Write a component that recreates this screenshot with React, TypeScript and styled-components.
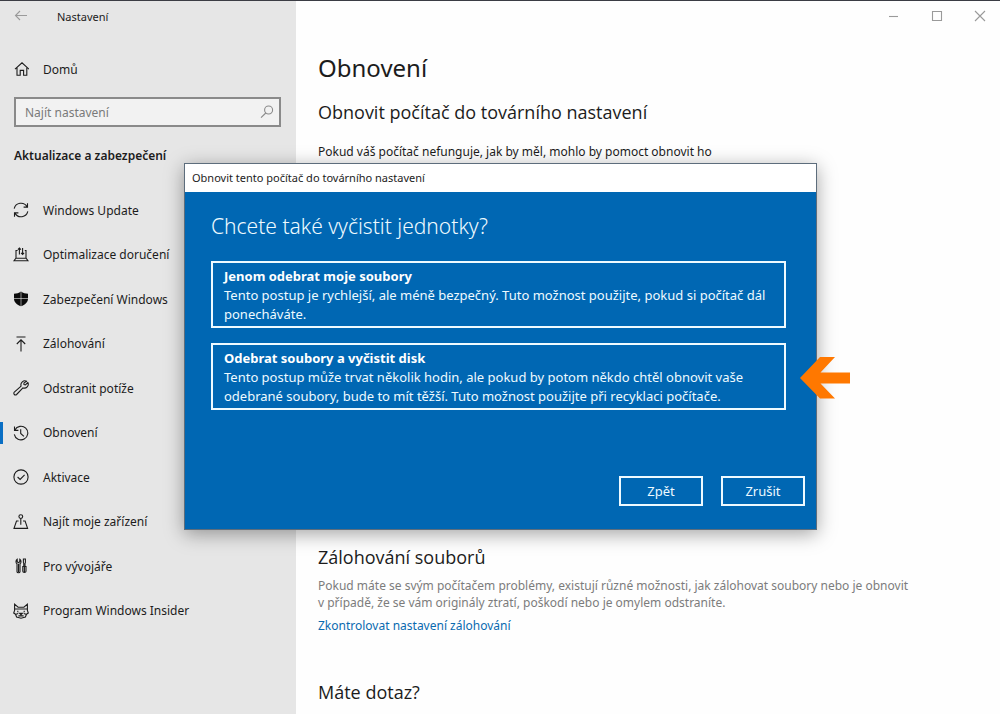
import React from "react";
import styled, { createGlobalStyle, css } from "styled-components";

const GlobalStyle = createGlobalStyle`
  *, *::before, *::after { box-sizing: border-box; }
  body {
    margin: 0;
    background: #fefefe;
    color: #1c1c1c;
    font-family: "Noto Sans", "Open Sans", sans-serif;
    font-size: 12px;
    line-height: 17px;
  }
  h1, h2, h3, p, ul { margin: 0; padding: 0; font-weight: 400; }
  ul { list-style: none; }
  button, input { font: inherit; color: inherit; }
`;

const Window = styled.div`
  display: flex;
  min-height: 100vh;
  border-top: 1px solid #3b3d44;
`;

const Sidebar = styled.nav`
  flex: 0 0 296px;
  background: #e6e6e6;
  padding-bottom: 24px;
`;

const TitleBar = styled.header`
  display: flex;
  align-items: center;
  height: 30px;
  padding-left: 13px;
  gap: 28px;
  font-size: 11px;
`;

const IconButton = styled.button`
  display: grid;
  place-items: center;
  padding: 0;
  border: 0;
  background: none;
  color: #9a9a9a;
`;

const navItem = css`
  display: flex;
  align-items: center;
  gap: 14px;
  padding-left: 13px;
  color: #1c1c1c;
  text-decoration: none;
`;

const HomeLink = styled.a`
  ${navItem}
  height: 40px;
  margin-top: 18px;
`;

const SearchBox = styled.label`
  display: flex;
  align-items: center;
  height: 30px;
  margin: 8px 15px 0 14px;
  padding: 0 4px 0 9px;
  border: 2px solid #8a8a8a;
  background: #f2f2f2;
  color: #8a8a8a;
`;

const SearchInput = styled.input`
  flex: 1;
  min-width: 0;
  padding: 0;
  border: 0;
  outline: 0;
  background: none;
  &::placeholder { color: #7a7a7a; opacity: 1; }
`;

const GroupTitle = styled.h2`
  margin: 20px 14px 0;
  font-size: 12px;
  line-height: 18px;
  font-weight: 600;
`;

const NavList = styled.ul`
  display: flex;
  flex-direction: column;
  height: 445px;
  margin-top: 23px;
`;

const NavRow = styled.li`
  display: flex;
  flex: 1;
`;

const NavLink = styled.a<{ $active?: boolean }>`
  ${navItem}
  flex: 1;
  position: relative;
  &::before {
    content: "";
    display: ${(p) => (p.$active ? "block" : "none")};
    position: absolute;
    left: 0;
    width: 3px;
    height: 22px;
    background: #0a6fc4;
  }
`;

const Main = styled.main`
  flex: 1;
  min-width: 0;
`;

const WindowControls = styled.div`
  display: flex;
  justify-content: flex-end;
  height: 30px;
  padding-right: 12px;
  gap: 27px;
`;

const Content = styled.div`
  padding: 17px 22px 0;
`;

const PageTitle = styled.h1`
  margin-bottom: 11px;
  font-size: 24px;
  line-height: 40px;
`;

const Section = styled.section<{ $space: number }>`
  min-height: ${(p) => p.$space}px;
`;

const SectionTitle = styled.h2`
  font-family: "Open Sans", "Noto Sans", sans-serif;
  font-size: 18px;
  line-height: 26px;
`;

const Lead = styled.p`
  margin-top: 18px;
`;

const Note = styled.p`
  max-width: 620px;
  margin-top: 7px;
  color: #7c7c7c;
`;

const TextLink = styled.a`
  display: inline-block;
  margin-top: 6px;
  color: #0a6ab0;
  text-decoration: none;
`;

const Overlay = styled.div`
  position: absolute;
  inset: 0;
  padding: 163px 183px 0 184px;
`;

const Dialog = styled.div`
  position: relative;
  border: 1px solid #5d6d7c;
  background: #0067b3;
  color: #eefaff;
  font-size: 13px;
  box-shadow: 0 4px 18px rgba(0, 0, 0, 0.36);
`;

const DialogBar = styled.div`
  height: 28px;
  padding-left: 7px;
  background: #fff;
  color: #1c1c1c;
  font-size: 11px;
  line-height: 28px;
`;

const DialogBody = styled.div`
  display: flex;
  flex-direction: column;
  gap: 15px;
  padding: 17px 30px 0 26px;
`;

const DialogTitle = styled.h2`
  margin-bottom: 3px;
  font-size: 21px;
  line-height: 34px;
  font-weight: 300;
`;

const OptionCard = styled.button`
  padding: 4px 9px 2px 11px;
  border: 2px solid #eefaff;
  background: none;
  text-align: left;
  line-height: 19px;
`;

const OptionTitle = styled.strong`
  display: block;
  color: #fff;
`;

const DialogActions = styled.div`
  display: flex;
  justify-content: flex-end;
  gap: 18px;
  padding: 66px 11px 23px;
`;

const ActionButton = styled.button`
  width: 84px;
  height: 30px;
  padding: 0;
  border: 2px solid #eefaff;
  background: none;
`;

const Pointer = styled.svg`
  position: absolute;
  top: 193px;
  right: -34px;
`;

const Svg = ({ children, size = 16 }: { children: React.ReactNode; size?: number }) => (
  <svg width={size} height={size} viewBox="0 0 16 16" fill="none" stroke="currentColor" strokeWidth="1.1" aria-hidden="true">
    {children}
  </svg>
);

const BackIcon = () => <Svg><path d="M14 7.500H2.500M7 3 2.500 7.500 7 12" /></Svg>;
const HomeIcon = () => <Svg><path d="M2 8.200 9 1.800l7 6.400M4 6.800v7.400h3.200V9.400h3.400v4.800h3.200V6.800" /></Svg>;
const SearchIcon = () => <Svg><circle cx="9.600" cy="6" r="4" /><path d="M6.800 9 2 13.600" /></Svg>;
const SyncIcon = () => (
  <Svg><path d="M1.200 6.600A7 7 0 0 1 14 4.600M14.500 1.200v3.900h-3.900M14.800 9.400A7 7 0 0 1 2 11.400M1.500 14.800v-3.900h3.900" /></Svg>
);
const DeliveryIcon = () => (
  <Svg><path d="M4.600 3.500H3v7.500L1 13.700h14L13 11V3.500h-1.200M3 11.200h10M6.400 7.500V1M4.900 2.700l1.500-1.600 1.500 1.600M9.600 1v6.500M8.100 5.900l1.500 1.600 1.500-1.600" /></Svg>
);
const ShieldIcon = () => (
  <Svg>
    <path d="M8 .5C6 2 3.500 2.700 1 2.700v5c0 3.500 3 6 7 7.500 4-1.500 7-4 7-7.500v-5C12.500 2.700 10 2 8 .5Z" fill="#0c0c0c" stroke="none" />
    <path d="M8 .5v15M1 7.500h14" stroke="#e6e6e6" strokeWidth=".6" />
  </Svg>
);
const UploadIcon = () => <Svg><path d="M3.500 1h9M8 15.500V4M3.800 8 8 3.800 12.200 8" /></Svg>;
const WrenchIcon = () => (
  <Svg><path d="M13.700 1.300a4 4 0 0 0-5.600 4.800L1.300 12.200a1.600 1.600 0 0 0 2.300 2.300L9.900 7.900a4 4 0 0 0 5-5.400L12.400 4.900 10.900 4.500 11 2.900Z" strokeLinejoin="round" /></Svg>
);
const HistoryIcon = () => (
  <Svg><path d="M1.900 5A6.800 6.800 0 1 1 1.300 9.300M1.500 1.500v3.900h3.900M7.700 4.200v4.300l3.200 2.800" /></Svg>
);
const CheckIcon = () => <Svg><circle cx="8" cy="8" r="7.100" /><path d="m4.600 8 2.500 2.500L11.600 5.800" /></Svg>;
const LocateIcon = () => (
  <Svg><circle cx="7.800" cy="2.600" r="1.900" /><path d="M7.800 4.600v6.200M5.600 7H3.500L1 14.400h13.600L12.100 7H10" /></Svg>
);
const ToolsIcon = () => (
  <Svg>
    <path d="M4.200 1.300v2.500L5.500 4.800 6.800 3.800V1.300C8.500 2.500 8.300 5 7 5.700v8.100c0 1.300-3 1.300-3 0V5.700C2.700 5 2.500 2.500 4.200 1.300ZM5.500 6v8M10.400 1h2v3.500l-.4 1v3h-1.200v-3l-.4-1ZM9.800 8.500h3.200v4.800c0 1.600-3.200 1.600-3.200 0ZM11.400 8.500v6" />
  </Svg>
);
const InsiderIcon = () => (
  <Svg>
    <path d="M1.600 1.200v6.300L.7 10l1.800 1.200L3.600 14l4.400 1.200L12.400 14l1.100-2.800L15.300 10l-.9-2.500V1.200L10.900 4.200H5.100ZM1.700 6h12.700M4.800 7.700v1.500M11.200 7.700v1.500M6.600 10.300h2.800L8 11.700ZM3 11.300l2.200-.8M13 11.300l-2.200-.8M5.400 12.900h5.200" />
  </Svg>
);

const sections = [
  { label: "Windows Update", icon: <SyncIcon /> },
  { label: "Optimalizace doručení", icon: <DeliveryIcon /> },
  { label: "Zabezpečení Windows", icon: <ShieldIcon /> },
  { label: "Zálohování", icon: <UploadIcon /> },
  { label: "Odstranit potíže", icon: <WrenchIcon /> },
  { label: "Obnovení", icon: <HistoryIcon />, active: true },
  { label: "Aktivace", icon: <CheckIcon /> },
  { label: "Najít moje zařízení", icon: <LocateIcon /> },
  { label: "Pro vývojáře", icon: <ToolsIcon /> },
  { label: "Program Windows Insider", icon: <InsiderIcon /> },
];

export default function App() {
  return (
    <>
      <GlobalStyle />
      <Window>
        <Sidebar aria-label="Nastavení">
          <TitleBar>
            <IconButton aria-label="Zpět"><BackIcon /></IconButton>
            <span>Nastavení</span>
          </TitleBar>
          <HomeLink href="#domu"><HomeIcon />Domů</HomeLink>
          <SearchBox>
            <SearchInput type="text" placeholder="Najít nastavení" aria-label="Najít nastavení" />
            <SearchIcon />
          </SearchBox>
          <GroupTitle>Aktualizace a zabezpečení</GroupTitle>
          <NavList>
            {sections.map((s) => (
              <NavRow key={s.label}>
                <NavLink href="#sekce" $active={s.active} aria-current={s.active ? "page" : undefined}>
                  {s.icon}
                  {s.label}
                </NavLink>
              </NavRow>
            ))}
          </NavList>
        </Sidebar>
        <Main>
          <WindowControls>
            <IconButton aria-label="Minimalizovat"><Svg><path d="M3 8.500h9" /></Svg></IconButton>
            <IconButton aria-label="Maximalizovat"><Svg><path d="M3.500 3.500h9v9h-9z" /></Svg></IconButton>
            <IconButton aria-label="Zavřít"><Svg><path d="m3 3 10 10M13 3 3 13" /></Svg></IconButton>
          </WindowControls>
          <Content>
            <PageTitle>Obnovení</PageTitle>
            <Section $space={445}>
              <SectionTitle>Obnovit počítač do továrního nastavení</SectionTitle>
              <Lead>Pokud váš počítač nefunguje, jak by měl, mohlo by pomoct obnovit ho</Lead>
            </Section>
            <Section $space={135}>
              <SectionTitle>Zálohování souborů</SectionTitle>
              <Note>
                Pokud máte se svým počítačem problémy, existují různé možnosti, jak zálohovat soubory nebo je obnovit
                v&nbsp;případě, že se vám originály ztratí, poškodí nebo je omylem odstraníte.
              </Note>
              <TextLink href="#zalohovani">Zkontrolovat nastavení zálohování</TextLink>
            </Section>
            <SectionTitle>Máte dotaz?</SectionTitle>
          </Content>
        </Main>
      </Window>
      <Overlay>
        <Dialog role="dialog" aria-label="Obnovit tento počítač do továrního nastavení">
          <DialogBar>Obnovit tento počítač do továrního nastavení</DialogBar>
          <DialogBody>
            <DialogTitle>Chcete také vyčistit jednotky?</DialogTitle>
            <OptionCard>
              <OptionTitle>Jenom odebrat moje soubory</OptionTitle>
              Tento postup je rychlejší, ale méně bezpečný. Tuto možnost použijte, pokud si počítač dál ponecháváte.
            </OptionCard>
            <OptionCard>
              <OptionTitle>Odebrat soubory a vyčistit disk</OptionTitle>
              Tento postup může trvat několik hodin, ale pokud by potom někdo chtěl obnovit vaše odebrané soubory,
              bude to mít těžší. Tuto možnost použijte při recyklaci počítače.
            </OptionCard>
          </DialogBody>
          <DialogActions>
            <ActionButton>Zpět</ActionButton>
            <ActionButton>Zrušit</ActionButton>
          </DialogActions>
          <Pointer width="50" height="42" viewBox="0 0 50 42" aria-hidden="true">
            <path d="M0 21 20 0h15L20.500 15.500H50v11H20.500L35 41.500H20Z" fill="#ff7800" />
          </Pointer>
        </Dialog>
      </Overlay>
    </>
  );
}
